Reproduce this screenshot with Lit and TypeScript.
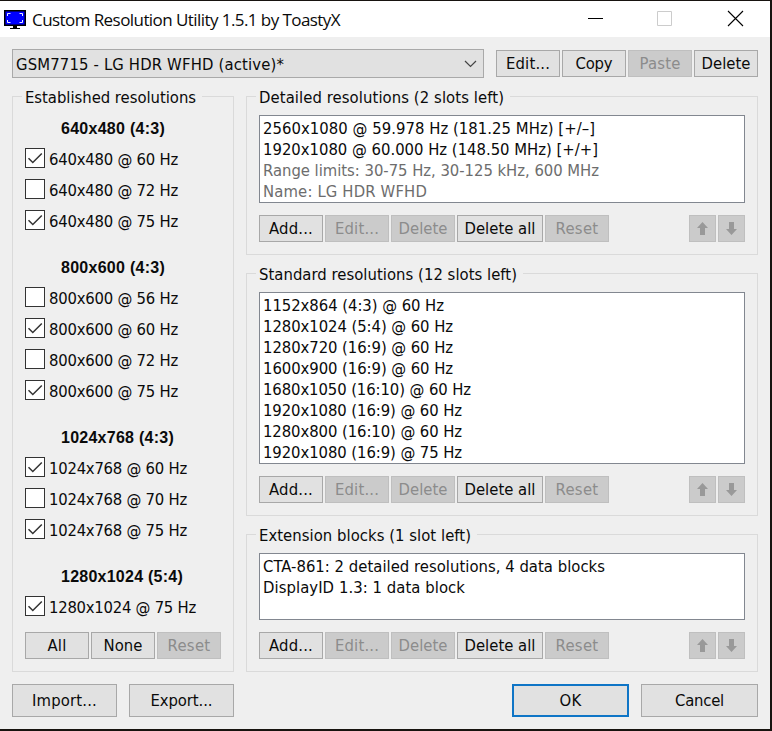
import { LitElement, html, css, svg, nothing } from "lit";
import { customElement } from "lit/decorators.js";

const UI_FONT = '16.5px "DejaVu Sans Condensed"';
const TITLE_FONT = '17px "Open Sans"';
const BOLD_FONT = 'bold 16px "Liberation Sans"';

const ctx = document.createElement("canvas").getContext("2d")!;

/** Text set to a given advance width by even tracking. */
const fit = (text: string, width: number, font = UI_FONT) => {
  ctx.font = font;
  const gap = (width - ctx.measureText(text).width) / text.length;
  return html`<span class="fit" style="letter-spacing:${gap.toFixed(3)}px">${text}</span>`;
};

type Label = [text: string, width: number];

const ADD: Label = ["Add...", 44];
const EDIT: Label = ["Edit...", 44];
const DELETE: Label = ["Delete", 49];
const DELETE_ALL: Label = ["Delete all", 71];
const RESET: Label = ["Reset", 43];

const modes: { title: Label; items: [string, number, boolean][] }[] = [
  {
    title: ["640x480 (4:3)", 104],
    items: [
      ["640x480 @ 60 Hz", 129, true],
      ["640x480 @ 72 Hz", 129, false],
      ["640x480 @ 75 Hz", 129, true],
    ],
  },
  {
    title: ["800x600 (4:3)", 104],
    items: [
      ["800x600 @ 56 Hz", 129, false],
      ["800x600 @ 60 Hz", 129, true],
      ["800x600 @ 72 Hz", 129, false],
      ["800x600 @ 75 Hz", 129, true],
    ],
  },
  {
    title: ["1024x768 (4:3)", 113],
    items: [
      ["1024x768 @ 60 Hz", 138, true],
      ["1024x768 @ 70 Hz", 138, false],
      ["1024x768 @ 75 Hz", 138, true],
    ],
  },
  {
    title: ["1280x1024 (5:4)", 122],
    items: [["1280x1024 @ 75 Hz", 147, true]],
  },
];

const lists: { title: Label; cls: string; rows: [string, number, boolean?][] }[] = [
  {
    title: ["Detailed resolutions (2 slots left)", 245],
    cls: "detailed",
    rows: [
      ["2560x1080 @ 59.978 Hz (181.25 MHz) [+/–]", 332],
      ["1920x1080 @ 60.000 Hz (148.50 MHz) [+/+]", 335],
      ["Range limits: 30-75 Hz, 30-125 kHz, 600 MHz", 336, true],
      ["Name: LG HDR WFHD", 164, true],
    ],
  },
  {
    title: ["Standard resolutions (12 slots left)", 258],
    cls: "standard",
    rows: [
      ["1152x864 (4:3) @ 60 Hz", 181],
      ["1280x1024 (5:4) @ 60 Hz", 190],
      ["1280x720 (16:9) @ 60 Hz", 190],
      ["1600x900 (16:9) @ 60 Hz", 190],
      ["1680x1050 (16:10) @ 60 Hz", 208],
      ["1920x1080 (16:9) @ 60 Hz", 199],
      ["1280x800 (16:10) @ 60 Hz", 199],
      ["1920x1080 (16:9) @ 75 Hz", 199],
    ],
  },
  {
    title: ["Extension blocks (1 slot left)", 212],
    cls: "extension",
    rows: [
      ["CTA-861: 2 detailed resolutions, 4 data blocks", 342],
      ["DisplayID 1.3: 1 data block", 202],
    ],
  },
];

@customElement("app-root")
export class AppRoot extends LitElement {
  static styles = css`
    :host {
      display: block;
      box-sizing: border-box;
      width: 772px;
      height: 731px;
      padding: 1px 2px 2px 0;
      background: #17130f;
      font: 16.5px/20px "DejaVu Sans Condensed", "DejaVu Sans", sans-serif;
      color: #0a0a0a;
      overflow: hidden;
    }
    * { box-sizing: border-box; }
    .fit { white-space: pre; display: inline-block; margin: 1px 0 -1px; }
    .window { height: 728px; background: #efefef; }
    .titlebar {
      display: flex;
      align-items: center;
      height: 36px;
      background: #fff;
      padding-left: 4px;
    }
    .logo { width: 22px; height: 20px; margin: 2px 6px 0 0; }
    .caption {
      flex: 1;
      font: 17px/24px "Open Sans", sans-serif;
    }
    .controls { display: flex; margin-right: 11px; }
    .controls svg { width: 46px; height: 36px; margin-left: 24px; }
    .body { padding: 12px 12px 0; }
    .top { display: flex; align-items: center; gap: 2px; height: 29px; }
    .combo {
      width: 472px;
      height: 29px;
      margin-right: 10px;
      border: 1px solid #a9a9a9;
      background: #e1e1e1;
      display: flex;
      align-items: center;
      justify-content: space-between;
      padding: 0 6px 0 3px;
    }
    .combo svg { width: 13px; height: 8px; }
    button {
      width: 64px;
      height: 27px;
      padding: 0;
      border: 1px solid #a8a8a8;
      background: #e1e1e1;
      color: #0a0a0a;
      font: inherit;
      border-radius: 0;
      display: flex;
      align-items: center;
      justify-content: center;
      flex: none;
    }
    button .fit { margin: 1px 0 0; }
    button:disabled { background: #cbcbcb; border-color: #bfbfbf; color: #8c8c8c; }
    .wide { width: 86px; }
    .arrow { width: 27px; }
    .arrow svg { width: 13px; height: 15px; }
    .main { display: flex; gap: 12px; margin-top: 18px; }
    .group {
      border: 1px solid #dadada;
      padding: 0 12px;
    }
    .legend {
      width: max-content;
      height: 20px;
      margin: -10px 0 0 -3px;
      padding: 0 6px 0 3px;
      background: #efefef;
    }
    .established { width: 222px; height: 576px; }
    .heading {
      height: 46px;
      padding: 21px 0 0 36px;
      font: bold 16px/20px "Liberation Sans", sans-serif;
    }
    .legend + .heading { height: 36px; padding-top: 11px; }
    .check { display: flex; gap: 4px; height: 31px; padding-top: 5px; }
    .box {
      width: 20px;
      height: 20px;
      border: 1px solid #333;
      background: #fff;
    }
    .box svg { display: block; width: 18px; height: 18px; }
    .mode { padding-top: 1px; }
    .row { display: flex; gap: 2px; }
    .established .row { margin-top: 10px; }
    .right { display: flex; flex-direction: column; gap: 18px; width: 512px; }
    .detailed { height: 159px; }
    .standard { height: 243px; }
    .extension { height: 138px; }
    .list {
      height: calc(100% - 69px);
      margin-top: 8px;
      margin-bottom: 12px;
      border: 1px solid #828790;
      background: #fff;
      padding: 1px 3px;
    }
    .extension .list { height: 67px; }
    .item { height: 21px; line-height: 22px; }
    .dim { color: #6d6d6d; }
    .spacer { flex: 1; }
    .footer { display: flex; gap: 12px; margin-top: 12px; }
    .footer button { width: 105px; height: 33px; }
    .footer .big { width: 117px; }
    .footer .primary { border: 2px solid #0f75c6; }
  `;

  private button(label: Label, cls = "", disabled = false) {
    return html`<button class=${cls} ?disabled=${disabled}>${fit(...label)}</button>`;
  }

  private arrow(name: string, path: string) {
    return html`<button class="arrow" disabled aria-label=${name}>
      <svg viewBox="0 0 13 15"><path d=${path} fill="#999" /></svg>
    </button>`;
  }

  private tick() {
    return svg`<svg viewBox="0 0 18 18"><path d="M2.5 9.2 L6.8 13.5 L15.8 4.5" fill="none" stroke="#333" stroke-width="1.5" /></svg>`;
  }

  render() {
    return html`
      <div class="window">
        <div class="titlebar">
          <svg class="logo" viewBox="0 0 22 20">
            <path d="M0 0H22V16H13V18H16V19H6V18H9V16H0Z" fill="#000" />
            <path d="M1.500 1.500H20.500V14.500H1.500Z" fill="#00f" />
            <path d="M3.500 6V3.500H6.500M15.500 3.500H18.500V6M3.500 10V12.500H6.500M15.500 12.500H18.500V10" fill="none" stroke="#eef" />
          </svg>
          <div class="caption">${fit("Custom Resolution Utility 1.5.1 by ToastyX", 308, TITLE_FONT)}</div>
          <div class="controls">
            <svg viewBox="0 0 46 36"><path d="M15 17.500H30" stroke="#000" /></svg>
            <svg viewBox="0 0 46 36"><path d="M14.500 10.500H28.500V24.500H14.500Z" fill="none" stroke="#ccc" /></svg>
            <svg viewBox="0 0 46 36"><path d="M15 10L30 25M30 10L15 25" stroke="#000" stroke-width="1.1" /></svg>
          </div>
        </div>
        <div class="body">
          <div class="top">
            <div class="combo">
              ${fit("GSM7715 - LG HDR WFHD (active)*", 268)}
              <svg viewBox="0 0 13 8"><path d="M1 1L6.500 6.500L12 1" fill="none" stroke="#444" stroke-width="1.200" /></svg>
            </div>
            ${this.button(EDIT)}${this.button(["Copy", 37])}
            ${this.button(["Paste", 41], "", true)}${this.button(DELETE)}
          </div>
          <div class="main">
            <div class="group established">
              <div class="legend">${fit("Established resolutions", 171)}</div>
              ${modes.map(
                (m) => html`
                  <div class="heading">${fit(m.title[0], m.title[1], BOLD_FONT)}</div>
                  ${m.items.map(
                    ([text, width, on]) => html`<div class="check">
                      <div class="box">${on ? this.tick() : nothing}</div>
                      <div class="mode">${fit(text, width)}</div>
                    </div>`,
                  )}
                `,
              )}
              <div class="row">
                ${this.button(["All", 19])}${this.button(["None", 39])}${this.button(RESET, "", true)}
              </div>
            </div>
            <div class="right">
              ${lists.map(
                (l) => html`<div class="group ${l.cls}">
                  <div class="legend">${fit(...l.title)}</div>
                  <div class="list">
                    ${l.rows.map(
                      ([text, width, dim]) =>
                        html`<div class="item ${dim ? "dim" : ""}">${fit(text, width)}</div>`,
                    )}
                  </div>
                  <div class="row">
                    ${this.button(ADD)}${this.button(EDIT, "", true)}${this.button(DELETE, "", true)}
                    ${this.button(DELETE_ALL, "wide")}${this.button(RESET, "", true)}
                    <div class="spacer"></div>
                    ${this.arrow("Move up", "M6.500 1L12 7H9V14H4V7H1Z")}
                    ${this.arrow("Move down", "M6.500 14L12 8H9V1H4V8H1Z")}
                  </div>
                </div>`,
              )}
            </div>
          </div>
          <div class="footer">
            ${this.button(["Import...", 65])}${this.button(["Export...", 62])}
            <div class="spacer"></div>
            ${this.button(["OK", 22], "big primary")}${this.button(["Cancel", 49], "big")}
          </div>
        </div>
      </div>
    `;
  }
}
